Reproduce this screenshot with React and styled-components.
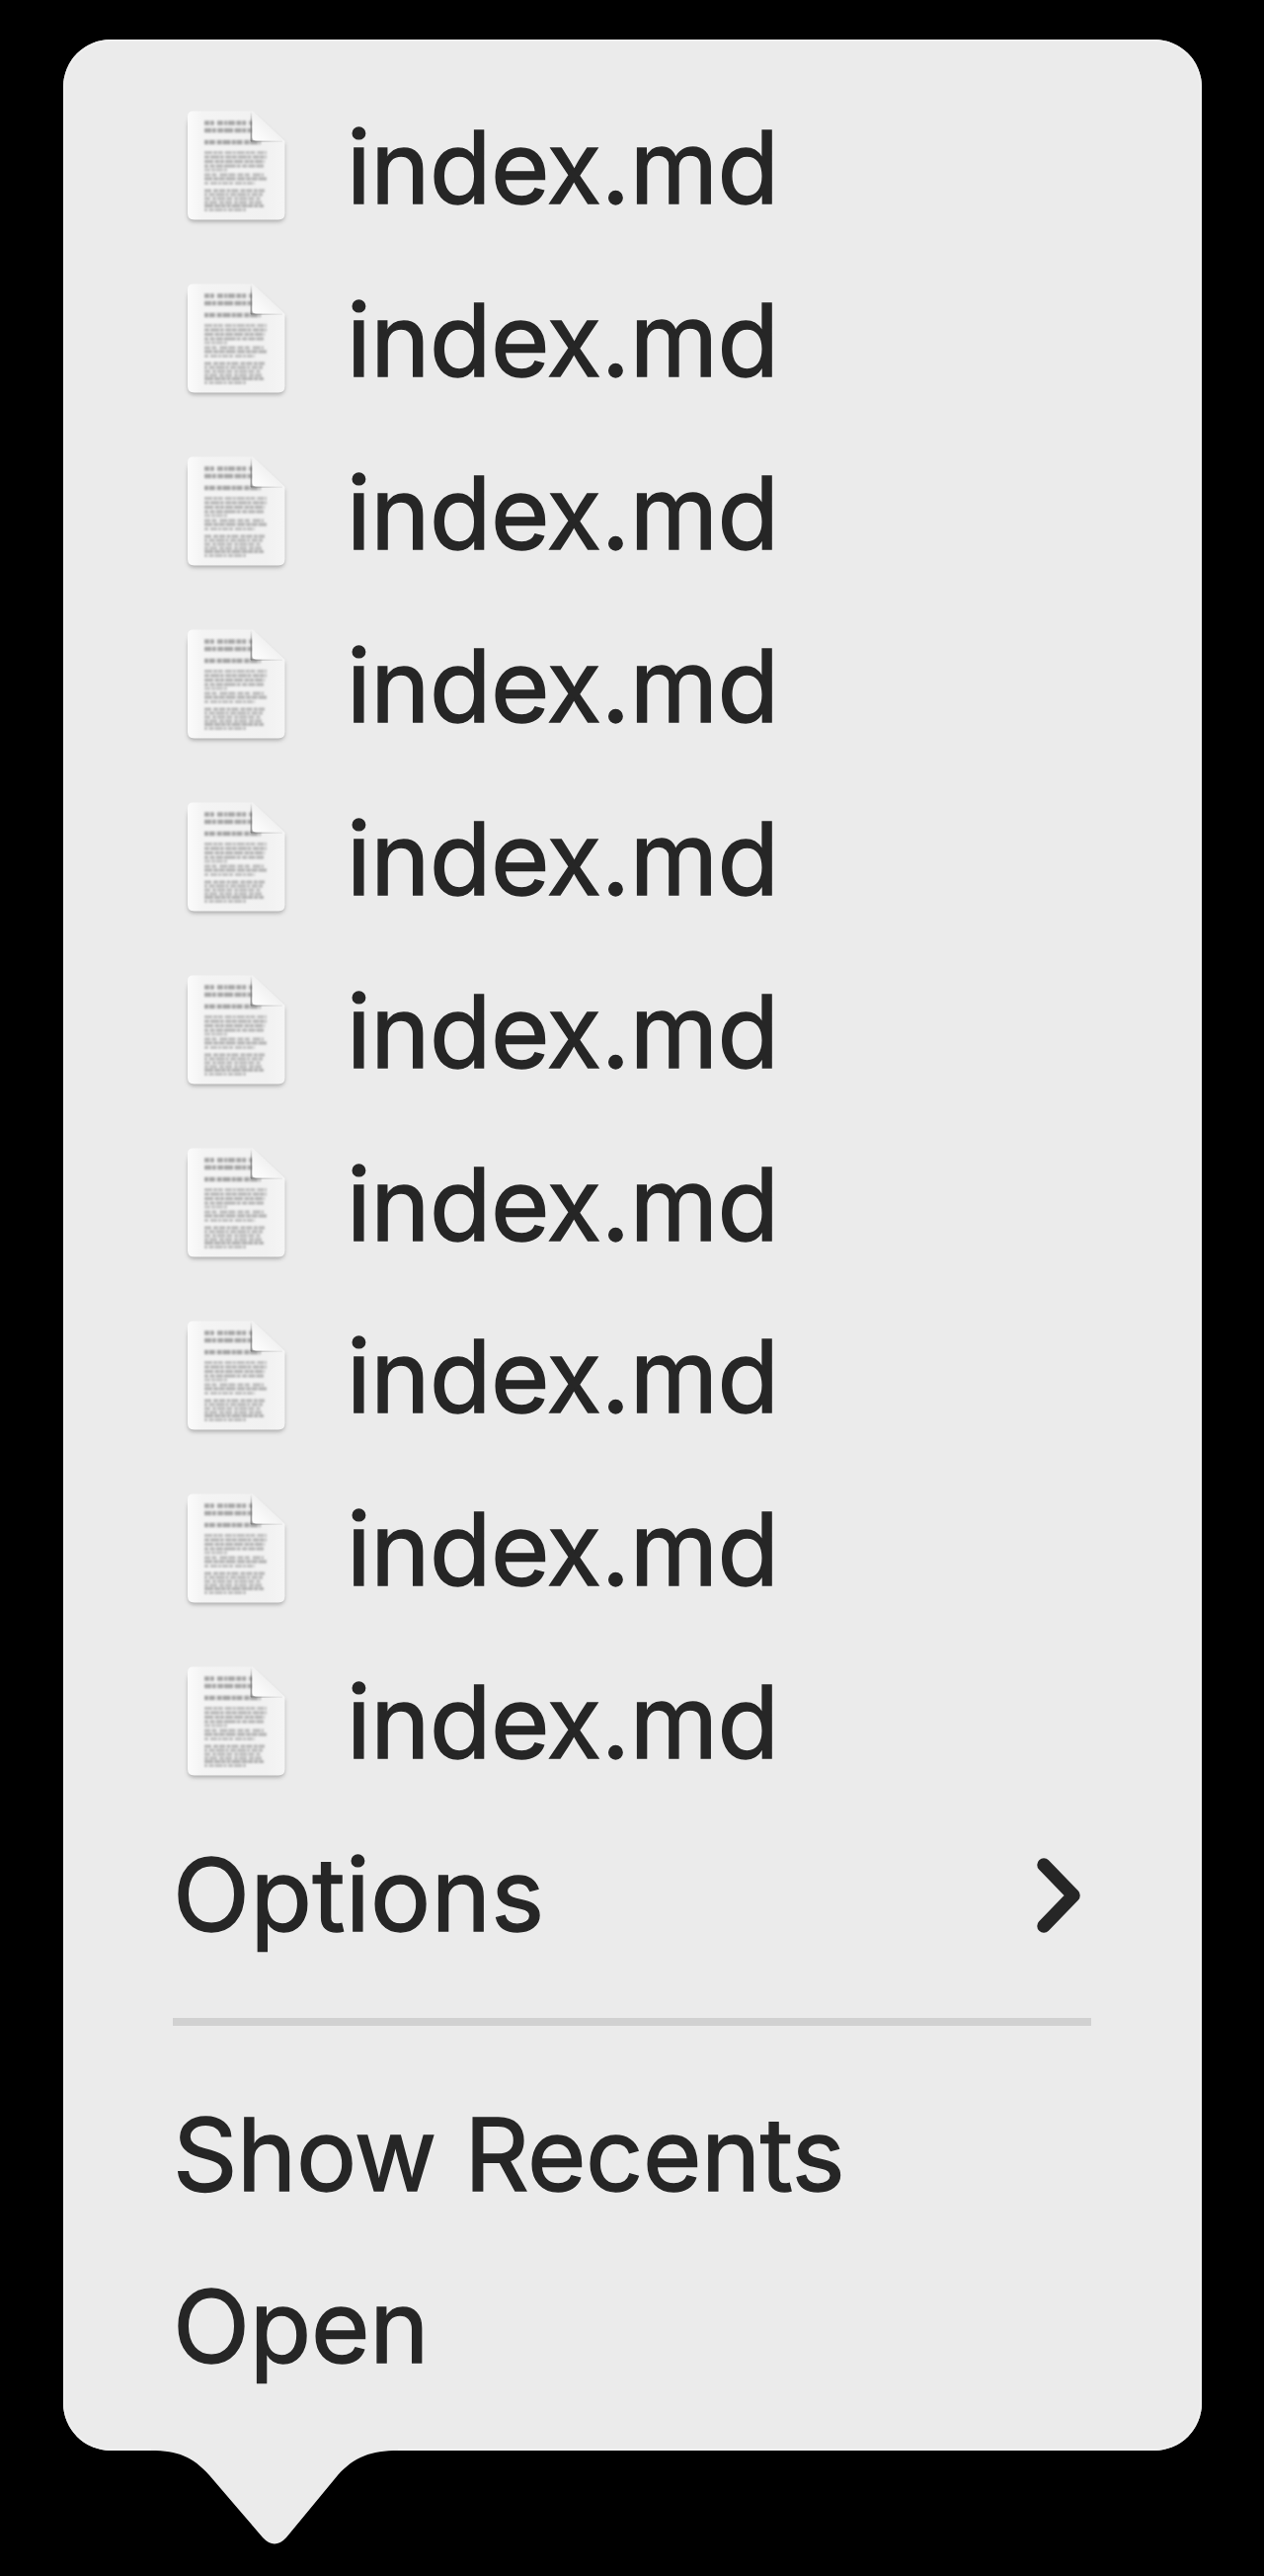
import React from "react";
import styled, { createGlobalStyle } from "styled-components";

const GlobalStyle = createGlobalStyle`
  * { box-sizing: border-box; }
  html, body { margin: 0; background: #000; }
`;

const Screen = styled.main`
  min-height: 2608px;
  padding: 40px 63.5px 0 64px;
  background: #000;
  font-family: Inter, "Liberation Sans", sans-serif;
  color: #262626;
`;

const Menu = styled.nav`
  height: 2440.5px;
  padding: 39px 111.5px 0 111px;
  border-radius: 48px;
  background: #ebebeb;
  box-shadow: inset 0 0 0 2px #f0f0f0;
`;

const Item = styled.div`
  display: flex;
  align-items: center;
  height: 174.93px;
  padding-left: ${(p) => (p.$inset ? "5px" : "0")};
`;

const Label = styled.span`
  padding-top: 6px;
  font-size: 102px;
  line-height: 169px;
  font-weight: 400;
  -webkit-text-stroke: 1.4px #262626;
  letter-spacing: ${(p) => p.$tracking || "0"};
  margin-left: ${(p) => p.$offset || "0"};
  white-space: nowrap;
`;

const Separator = styled.div`
  display: flex;
  align-items: center;
  height: 87.4px;

  &::before {
    content: "";
    flex: 1;
    height: 8px;
    background: #d1d1d1;
  }
`;

const FileIcon = styled.svg`
  flex: none;
  width: 120px;
  height: 130px;
`;

const Chevron = styled.svg`
  width: 50px;
  height: 86px;
  margin-left: auto;
  margin-right: 7px;
`;

const Tail = styled.svg`
  display: block;
  width: 250px;
  height: 100px;
  margin: -2px 0 0 89px;
`;

const lines = [
  [23.5, 76, "5 .9 4 3 6 1.2 3 .8 7 1.4", "#a6a6a6"],
  [31, 76, "7 .8 4 1.4 6 .8 9 1.5", "#a6a6a6"],
  [43, 84, "4 .8 6 1.8 5 .9 8 1.2", "#a4a4a4"],
  [53.5, 90, "8 1 4 .7 5 2 7 1 3 1", "#bdbdbd"],
  [58, 90, "5 1 9 .7 4 1.5 6 .6", "#b0b0b0"],
  [62.5, 88, "9 1.4 5 .6 4 1 8 1", "#b2b2b2"],
  [67, 87, "4 1.5 5 1.2 7 1 12 1", "#b2b2b2"],
  [71, 50, "6 1 4 .6 7 1", "#c3c3c3"],
  [76, 87, "6 1.4 5 3 8 1 7 2", "#b8b8b8"],
  [80, 90, "8 1 5 .6 6 1 10 1.5", "#b0b0b0"],
  [84.5, 78, "4 2 7 1 3 1 6 1", "#c0c0c0"],
  [92, 88, "7 2 5 1 6 1.4 4 1", "#b4b4b4"],
  [96, 86, "3 1.6 6 1 9 1", "#b8b8b8"],
  [100, 84, "6 2 4 1 8 1.2", "#bababa"],
  [104, 87, "4 1 8 2 5 1 7 2", "#bababa"],
  [107.5, 87, "9 1 6 .6 5 1 4 1", "#b2b2b2"],
  [111.5, 70, "3 1.5 5 1 8 1", "#bebebe"],
];

function DocumentIcon() {
  return (
    <FileIcon viewBox="0 0 120 130" aria-hidden="true">
      <defs>
        <linearGradient id="paper" x1="0" y1="0" x2="1" y2="0">
          <stop offset="0" stopColor="#fbfbfb" />
          <stop offset="0.15" stopColor="#f4f4f4" />
          <stop offset="0.8" stopColor="#f1f1f1" />
          <stop offset="1" stopColor="#f5f5f5" />
        </linearGradient>
        <linearGradient id="flap" x1="0" y1="1" x2="0.55" y2="0.45">
          <stop offset="0" stopColor="#fff" />
          <stop offset="1" stopColor="#f0f0f0" />
        </linearGradient>
        <linearGradient id="crease" x1="0" y1="12" x2="0" y2="42" gradientUnits="userSpaceOnUse">
          <stop offset="0" stopColor="#888" stopOpacity="0" />
          <stop offset="0.4" stopColor="#777" stopOpacity="0.6" />
          <stop offset="1" stopColor="#777" stopOpacity="0.7" />
        </linearGradient>
        <linearGradient id="creaseBase" x1="74" y1="0" x2="108" y2="0" gradientUnits="userSpaceOnUse">
          <stop offset="0" stopColor="#777" stopOpacity="0.5" />
          <stop offset="1" stopColor="#aaa" stopOpacity="0.1" />
        </linearGradient>
        <filter id="shade" x="-20%" y="-20%" width="140%" height="140%">
          <feGaussianBlur stdDeviation="1.9" />
        </filter>
        <filter id="edge" x="-10%" y="-10%" width="120%" height="120%">
          <feGaussianBlur stdDeviation="0.6" />
        </filter>
        <filter id="ink" x="-10%" y="-10%" width="120%" height="120%">
          <feGaussianBlur stdDeviation="0.9 0.8" />
        </filter>
      </defs>
      <path
        d="M10.5 26Q10.5 20 16 18H78L108 45V117Q108 123.500 101 123.500H17Q10.500 123.500 10.500 117Z"
        fill="#9c9c9c"
        opacity="0.85"
        filter="url(#shade)"
      />
      <path
        d="M10 17Q10 11.500 15.500 11.500H76L108.500 42V115Q108.500 121.500 102 121.500H16.500Q10 121.500 10 115Z"
        fill="url(#paper)"
        filter="url(#edge)"
      />
      <g filter="url(#ink)">
        {lines.map(([y, end, dash, color]) => (
          <path
            key={y}
            d={`M27 ${y}H${end}`}
            stroke={color}
            strokeWidth={y < 45 ? 4.4 : 3.2}
            strokeDasharray={dash}
          />
        ))}
      </g>
      <path d="M73.500 12H75.500V42H73.500Z" fill="url(#crease)" filter="url(#edge)" />
      <path d="M74 41H106V43H74Z" fill="url(#creaseBase)" filter="url(#edge)" />
      <path d="M75.500 11.500V37.500Q75.500 41.500 79.500 41.500H108Z" fill="url(#flap)" filter="url(#edge)" />
    </FileIcon>
  );
}

const files = Array.from({ length: 10 }, () => "index.md");

export default function App() {
  return (
    <>
      <GlobalStyle />
      <Screen>
        <Menu>
          {files.map((name, i) => (
            <Item key={i} $inset>
              <DocumentIcon />
              <Label $offset="51px" $tracking="-0.5px">{name}</Label>
            </Item>
          ))}
          <Item>
            <Label $tracking="0.4px">Options</Label>
            <Chevron viewBox="0 0 50 86" fill="none" aria-hidden="true">
              <path d="M9 15L39 46L9 77" stroke="#262626" strokeWidth="13.5" strokeLinecap="round" strokeLinejoin="round" />
            </Chevron>
          </Item>
          <Separator role="separator" />
          <Item>
            <Label $tracking="-0.4px">Show Recents</Label>
          </Item>
          <Item>
            <Label $tracking="-0.2px">Open</Label>
          </Item>
        </Menu>
        <Tail viewBox="0 0 250 100" aria-hidden="true">
          <path
            d="M0 0V2C27 2 42 8 59 27L113 90Q125 103 137 90L189 27C206 8 223 2 250 2V0Z"
            fill="#ebebeb"
          />
        </Tail>
      </Screen>
    </>
  );
}
